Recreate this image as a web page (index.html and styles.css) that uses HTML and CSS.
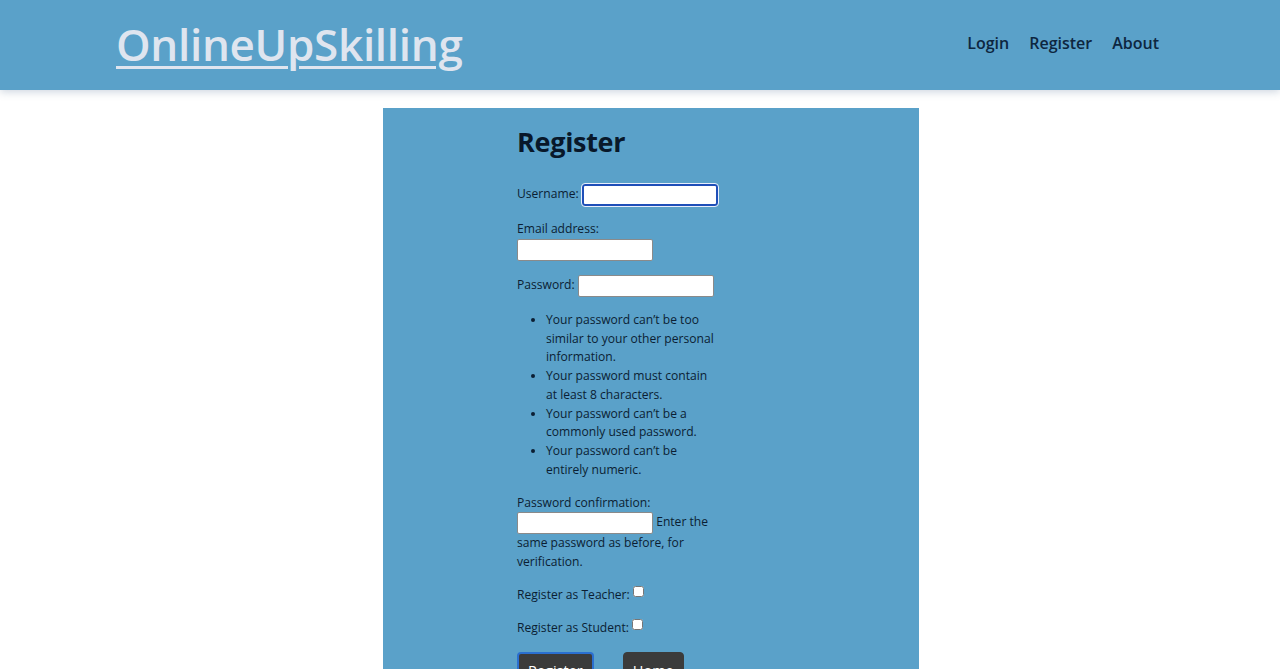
FILE: index.html
```html
<!DOCTYPE html>
<html lang="en">
<head>
<meta charset="utf-8">
<title>Register - OnlineUpSkilling</title>
<link rel="stylesheet" href="styles.css">
</head>
<body>
<header class="topbar">
  <a class="brand" href="#">OnlineUpSkilling</a>
  <nav class="nav">
    <a href="#">Login</a>
    <a href="#">Register</a>
    <a href="#">About</a>
  </nav>
</header>
<main class="card">
  <div class="form-col">
    <h2 class="title">Register</h2>
    <form>
      <p class="row"><label>Username:</label> <input class="field focused" type="text"></p>
      <p class="row"><label>Email address:</label><br><input class="field" type="email"></p>
      <p class="row"><label>Password:</label> <input class="field" type="password"></p>
      <ul class="help">
        <li>Your password can’t be too similar to your other personal information.</li>
        <li>Your password must contain at least 8 characters.</li>
        <li>Your password can’t be a commonly used password.</li>
        <li>Your password can’t be entirely numeric.</li>
      </ul>
      <p class="row"><label>Password confirmation:</label><br><input class="field" type="password"> <span>Enter the same password as before, for verification.</span></p>
      <p class="row"><label>Register as Teacher:</label> <input class="check" type="checkbox"></p>
      <p class="row"><label>Register as Student:</label> <input class="check" type="checkbox"></p>
      <div class="buttons">
        <button class="btn btn-focus" type="button">Register</button>
        <button class="btn" type="button">Home</button>
      </div>
    </form>
  </div>
</main>
</body>
</html>
```
FILE: styles.css
```css
html, body {
  margin: 0;
  padding: 0;
  background: #ffffff;
  font-family: "Open Sans", "Noto Sans", sans-serif;
  color: #0b1e33;
}
.topbar {
  height: 90px;
  background: #5aa1c9;
  display: flex;
  align-items: center;
  justify-content: space-between;
  padding: 0 121px 0 116px;
  box-shadow: 0 2px 8px rgba(60, 90, 130, 0.25);
  box-sizing: border-box;
}
.brand {
  font-size: 44px;
  font-weight: 600;
  color: #dfe5ef;
  text-decoration: underline;
  text-decoration-thickness: 3px;
  text-underline-offset: 5px;
  margin-top: -3px;
  letter-spacing: -0.3px;
}
.nav {
  display: flex;
  gap: 20px;
  margin-top: -4px;
}
.nav a {
  color: #0d2640;
  text-decoration: none;
  font-size: 16px;
  font-weight: 600;
}
.card {
  width: 536px;
  margin: 18px 0 0 383px;
  background: #5aa1c9;
  padding: 0 0 0 134px;
  box-sizing: border-box;
  min-height: 600px;
}
.form-col {
  width: 202px;
  font-size: 12.1px;
  line-height: 18.75px;
  color: #0b1e33;
}
.title {
  margin: 0;
  padding-top: 16px;
  font-size: 27px;
  line-height: 36px;
  font-weight: 700;
  letter-spacing: -0.3px;
  color: #08182a;
}
form { margin-top: 24px; }
.row { margin: 0 0 14px 0; }
.field {
  width: 136px;
  height: 22px;
  box-sizing: border-box;
  border: 1px solid #8a8a8a;
  border-radius: 2px;
  background: #fff;
  padding: 0 2px;
  vertical-align: middle;
  font-size: 12px;
  margin: 0;
}
.field.focused {
  border: 2px solid #1f4fb8;
  outline: 1px solid #e6eefc;
  border-radius: 3px;
}
.help {
  margin: 0 0 14px 0;
  padding-left: 29px;
}
.check {
  width: 11px;
  height: 11px;
  margin: 0 0 0 0;
  vertical-align: 2px;
}
.buttons {
  display: flex;
  gap: 29px;
  padding-top: 1px;
}
.btn {
  background: #3b3b3b;
  color: #fff;
  border: 1px solid #3b3b3b;
  border-radius: 4px;
  font-family: inherit;
  font-size: 14.5px;
  height: 36px;
  padding: 0 9px;
}
.btn-focus { border: 2px solid #2a6fd0; }
```
